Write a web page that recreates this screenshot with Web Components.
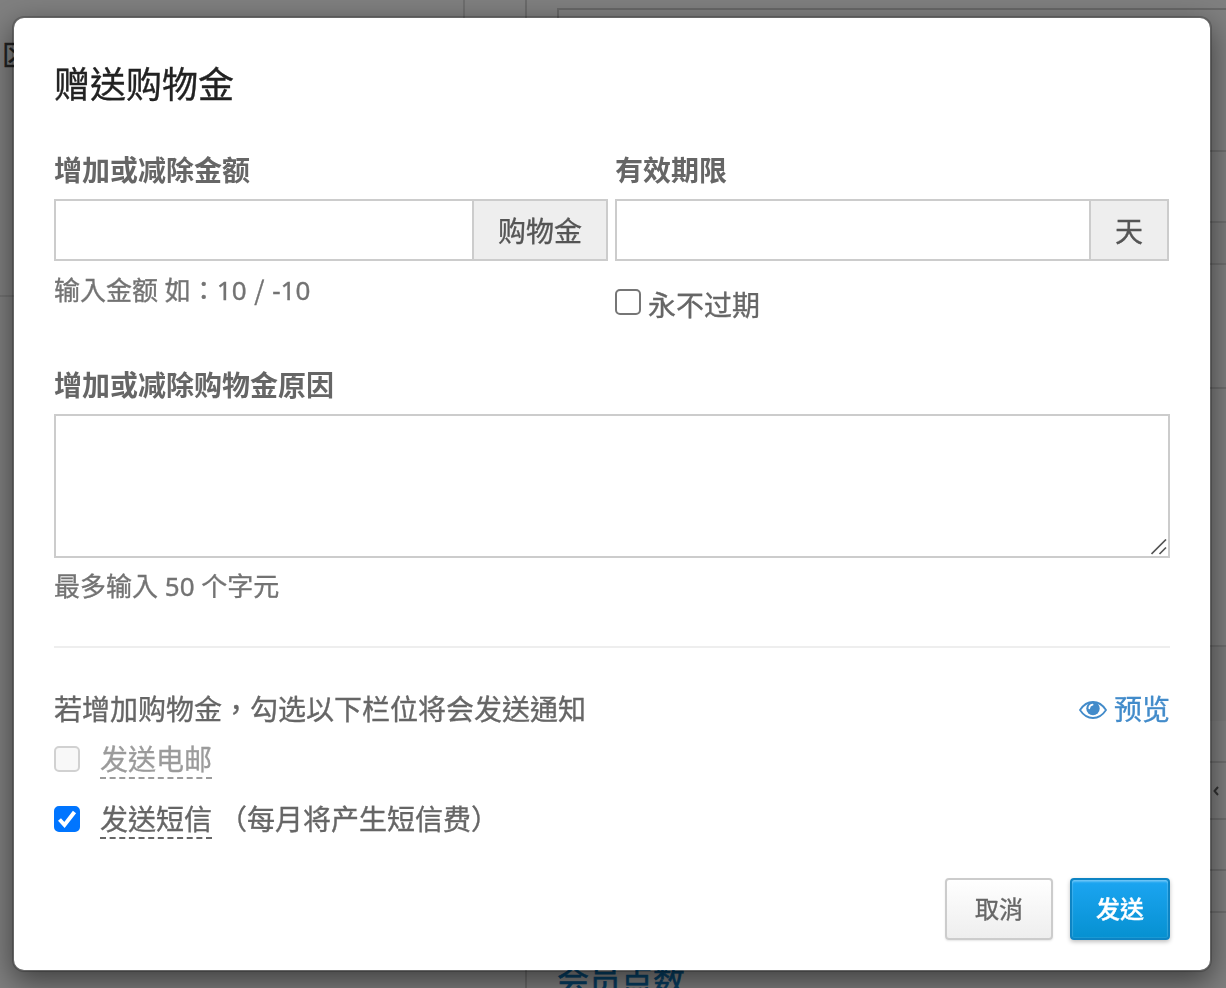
<!DOCTYPE html>
<html lang="zh-Hant">
<head>
<meta charset="utf-8">
<title>赠送购物金</title>
<style>
  html, body {
    margin: 0;
    height: 100%;
    overflow: hidden;
  }

  body {
    font-family: "Noto Sans", "Noto Sans CJK TC", sans-serif;
    font-size: 28px;
    line-height: 40px;
    color: #666;
    background: #fff;
    -webkit-text-stroke: .35px;
  }

  .slash {
    margin: 0 1px;
    font-family: "Noto Sans CJK TC", sans-serif;
  }
</style>
</head>
<body>
<admin-page></admin-page>

<credit-modal>
  <span slot="title">赠送购物金</span>

  <form-columns>
    <form-field label="增加或减除金额">
      <input-group addon="购物金"></input-group>
      <span slot="help">输入金额 如：10 <span class="slash">/</span> -10</span>
    </form-field>
    <form-field label="有效期限">
      <input-group addon="天"></input-group>
      <check-option class="never">永不过期</check-option>
    </form-field>
  </form-columns>

  <form-field class="reason" label="增加或减除购物金原因">
    <text-box></text-box>
    <span slot="help">最多输入 50 个字元</span>
  </form-field>

  <notify-section>
    <span slot="hint">若增加购物金，勾选以下栏位将会发送通知</span>
    <preview-link slot="link">预览</preview-link>
    <check-option tip disabled>发送电邮</check-option>
    <check-option tip checked>发送短信<span slot="note">（每月将产生短信费）</span></check-option>
  </notify-section>

  <ui-button slot="footer">取消</ui-button>
  <ui-button slot="footer" primary>发送</ui-button>
</credit-modal>

<script>
class BaseElement extends HTMLElement {
  constructor () {
    super()
    this.shadow = this.attachShadow({ mode: 'open' })
  }

  connectedCallback () {
    this.render()
  }
}

class AdminPage extends BaseElement {
  render () {
    const rows = [142, 71, 42, 124, 258, 116, 57, 51, 42, 67]

    this.shadow.innerHTML =
      /* html */`
      <style>
      :host {
        display: grid;
        grid-template-columns: 463px 62px 1fr;
        height: 100vh;
        overflow: hidden;
        color: #333;
      }

      .side, .gutter {
        box-sizing: border-box;
        border-right: 2px solid #ddd;
      }

      .side {
        width: 465px;
        height: 297px;
      }

      .gutter {
        width: 64px;
        border-color: #d6d6d6;
      }

      .side-head {
        box-sizing: border-box;
        height: 297px;
        padding: 35px 0 0 2px;
        border-bottom: 2px solid #e5e5e5;
        color: #444;
      }

      .main {
        padding: 8px 0 0 32px;
        min-width: 0;
      }

      .panel {
        border-top: 2px solid #d0d0d0;
        border-left: 2px solid #d0d0d0;
        height: 940px;
        overflow: hidden;
      }

      .row {
        box-sizing: border-box;
        display: flex;
        align-items: center;
        justify-content: flex-end;
        padding-right: 7px;
        border-bottom: 2px solid #ddd;
      }

      .row:nth-child(3) {
        background: #f9f9f9;
      }

      .row:nth-child(6) {
        background: linear-gradient(#f6f6f6 74px, #fff 74px);
      }

      .points {
        font-size: 32px;
        line-height: 40px;
        margin-top: 10px;
        color: #0c7cc4;
        -webkit-text-stroke: .6px;
      }
      </style>

      <div class="side"><div class="side-head">区</div></div>
      <div class="gutter"></div>
      <div class="main">
        <div class="panel"></div>
        <div class="points">会员点数</div>
      </div>
      `

    const panel = this.shadow.querySelector('.panel')

    rows.forEach((height, index) => {
      const row = document.createElement('div')
      row.classList.add('row')
      row.style.height = height + 'px'

      if (index === 6) {
        row.innerHTML = '<svg width="6" height="10" viewBox="0 0 6 10"><path d="M5 1 1.5 5 5 9" fill="none" stroke="#666" stroke-width="2"/></svg>'
      }

      panel.appendChild(row)
    })
  }
}

class CreditModal extends BaseElement {
  render () {
    this.shadow.innerHTML =
      /* html */`
      <style>
      :host {
        position: fixed;
        inset: 0;
        display: flex;
        align-items: flex-start;
        justify-content: center;
        padding-top: 16px;
        background: rgba(0, 0, 0, .5);
      }

      .dialog {
        box-sizing: border-box;
        display: flex;
        flex-direction: column;
        width: 1200px;
        height: 956px;
        margin-right: 2px;
        padding: 47px 40px 30px;
        border: 2px solid rgba(0, 0, 0, .2);
        border-radius: 12px;
        background: #fff;
        background-clip: padding-box;
        box-shadow: 0 10px 30px rgba(0, 0, 0, .5);
      }

      h1 {
        margin: 0 0 45px;
        font-size: 36px;
        line-height: 40px;
        font-weight: 400;
        color: #222;
      }

      .footer {
        display: flex;
        justify-content: flex-end;
        gap: 17px;
        margin-top: auto;
      }
      </style>

      <div class="dialog">
        <h1><slot name="title"></slot></h1>
        <slot></slot>
        <div class="footer"><slot name="footer"></slot></div>
      </div>
      `
  }
}

class FormColumns extends BaseElement {
  render () {
    this.shadow.innerHTML =
      /* html */`
      <style>
      :host {
        display: grid;
        grid-template-columns: 554px 554px;
        gap: 7px;
        height: 215px;
      }
      </style>
      <slot></slot>
      `
  }
}

class FormField extends BaseElement {
  render () {
    this.shadow.innerHTML =
      /* html */`
      <style>
      :host {
        display: block;
      }

      .label {
        height: 49px;
        font-weight: 700;
        -webkit-text-stroke: 0;
      }

      .help {
        margin-top: 8px;
        height: 40px;
        font-size: 26px;
        color: #737373;
      }
      </style>
      <div class="label"></div>
      <slot></slot>
      `

    this.shadow.querySelector('.label').textContent = this.getAttribute('label')

    if (this.querySelector('[slot="help"]')) {
      const help = document.createElement('div')
      help.classList.add('help')
      help.innerHTML = '<slot name="help"></slot>'
      this.shadow.appendChild(help)
    }
  }
}

class InputGroup extends BaseElement {
  render () {
    this.shadow.innerHTML =
      /* html */`
      <style>
      :host {
        display: flex;
        box-sizing: border-box;
        height: 62px;
        border: 2px solid #ccc;
      }

      input {
        flex: 1;
        min-width: 0;
        border: 0;
        padding: 0 22px;
        font: inherit;
        outline: none;
      }

      .addon {
        padding: 0 24px;
        line-height: 60px;
        border-left: 2px solid #ccc;
        background: #eee;
        color: #555;
      }
      </style>
      <input type="text">
      <div class="addon"></div>
      `

    this.shadow.querySelector('.addon').textContent = this.getAttribute('addon')
  }
}

class TextBox extends BaseElement {
  render () {
    this.shadow.innerHTML =
      /* html */`
      <style>
      :host {
        display: block;
        position: relative;
        height: 144px;
      }

      textarea {
        box-sizing: border-box;
        display: block;
        width: 100%;
        height: 100%;
        border: 2px solid #ccc;
        padding: 10px 22px;
        font: inherit;
        resize: none;
        outline: none;
      }

      svg {
        position: absolute;
        right: 3px;
        bottom: 3px;
      }
      </style>
      <textarea></textarea>
      <svg width="16" height="16" viewBox="0 0 16 16"><path d="M.5 15 15 .5M8.500 15l6.500-6.500" fill="none" stroke="#555" stroke-width="1.700"/></svg>
      `
  }
}

class CheckOption extends BaseElement {
  render () {
    this.shadow.innerHTML =
      /* html */`
      <style>
      :host {
        display: flex;
        align-items: flex-start;
        height: 40px;
      }

      :host(.never) {
        margin-top: 24px;
      }

      input {
        appearance: none;
        box-sizing: border-box;
        flex: none;
        width: 26px;
        height: 26px;
        margin: 4px 7px 0 0;
        border: 2px solid #767676;
        border-radius: 5px;
        background: #fff;
      }

      :host([tip]) {
        height: 60px;
      }

      :host([tip]) input {
        margin: 7px 20px 0 0;
      }

      :host([tip]) .text {
        height: 38px;
        border-bottom: 2px dashed #666;
      }

      :host([disabled]) input {
        border-color: #d1d1d1;
        background: #f8f8f8;
      }

      :host([disabled]) .text {
        opacity: .65;
      }

      .box {
        display: grid;
      }

      .box > * {
        grid-area: 1 / 1;
      }

      svg {
        display: none;
        margin: 7px 0 0;
      }

      :host([checked]) input {
        border-color: #0075ff;
        background: #0075ff;
      }

      :host([checked]) svg {
        display: block;
      }

      .note {
        margin-left: 7px;
      }
      </style>
      <div class="box">
        <input type="checkbox">
        <svg width="26" height="26" viewBox="0 0 26 26"><path d="M5.5 13.500 10.500 19 20.500 6" fill="none" stroke="#fff" stroke-width="4"/></svg>
      </div>
      <div class="text"><slot></slot></div>
      <div class="note"><slot name="note"></slot></div>
      `

    const input = this.shadow.querySelector('input')
    input.checked = this.hasAttribute('checked')
    input.disabled = this.hasAttribute('disabled')
  }
}

class NotifySection extends BaseElement {
  render () {
    this.shadow.innerHTML =
      /* html */`
      <style>
      :host {
        display: block;
        margin-top: 40px;
        padding-top: 41px;
        border-top: 2px solid #eee;
      }

      .head {
        display: flex;
        align-items: flex-start;
        justify-content: space-between;
        height: 50px;
      }
      </style>
      <div class="head">
        <slot name="hint"></slot>
        <slot name="link"></slot>
      </div>
      <slot></slot>
      `
  }
}

class PreviewLink extends BaseElement {
  render () {
    this.shadow.innerHTML =
      /* html */`
      <style>
      :host {
        display: flex;
        align-items: center;
        gap: 7px;
        color: #428bca;
      }

      svg {
        margin-top: 2px;
      }
      </style>
      <svg width="28" height="18" viewBox="0 0 28 18">
        <path d="M1 9C4.500 3.600 8.800 1 14 1s9.500 2.600 13 8c-3.500 5.400-7.800 8-13 8S4.500 14.400 1 9Z" fill="#fff" stroke="currentColor" stroke-width="1.800"/>
        <circle cx="14" cy="7.500" r="6.700" fill="currentColor"/>
        <path d="M10.300 7.300c0-2 1.300-3.400 3.300-3.700" fill="none" stroke="#fff" stroke-width="1.700" stroke-linecap="round"/>
      </svg>
      <slot></slot>
      `
  }
}

class UiButton extends BaseElement {
  render () {
    this.shadow.innerHTML =
      /* html */`
      <style>
      :host {
        display: block;
      }

      button {
        box-sizing: border-box;
        display: block;
        width: 108px;
        height: 62px;
        padding: 0;
        border: 2px solid #ccc;
        border-radius: 4px;
        font: inherit;
        font-size: 24px;
        color: #666;
        background: linear-gradient(#fff, #eee);
        box-shadow: 0 1px 2px rgba(0, 0, 0, .1);
      }

      :host([primary]) button {
        width: 100px;
        border-color: #0d84c4;
        font-weight: 500;
        color: #fff;
        background: linear-gradient(#1ca5f2, #0691d1);
        box-shadow: inset 0 2px 2px rgba(255, 255, 255, .3), inset 0 0 0 1px rgba(255, 255, 255, .08), 0 2px 4px rgba(0, 0, 0, .25);
      }
      </style>
      <button type="button"><slot></slot></button>
      `
  }
}

customElements.define('admin-page', AdminPage)
customElements.define('credit-modal', CreditModal)
customElements.define('form-columns', FormColumns)
customElements.define('form-field', FormField)
customElements.define('input-group', InputGroup)
customElements.define('text-box', TextBox)
customElements.define('check-option', CheckOption)
customElements.define('notify-section', NotifySection)
customElements.define('preview-link', PreviewLink)
customElements.define('ui-button', UiButton)
</script>
</body>
</html>
